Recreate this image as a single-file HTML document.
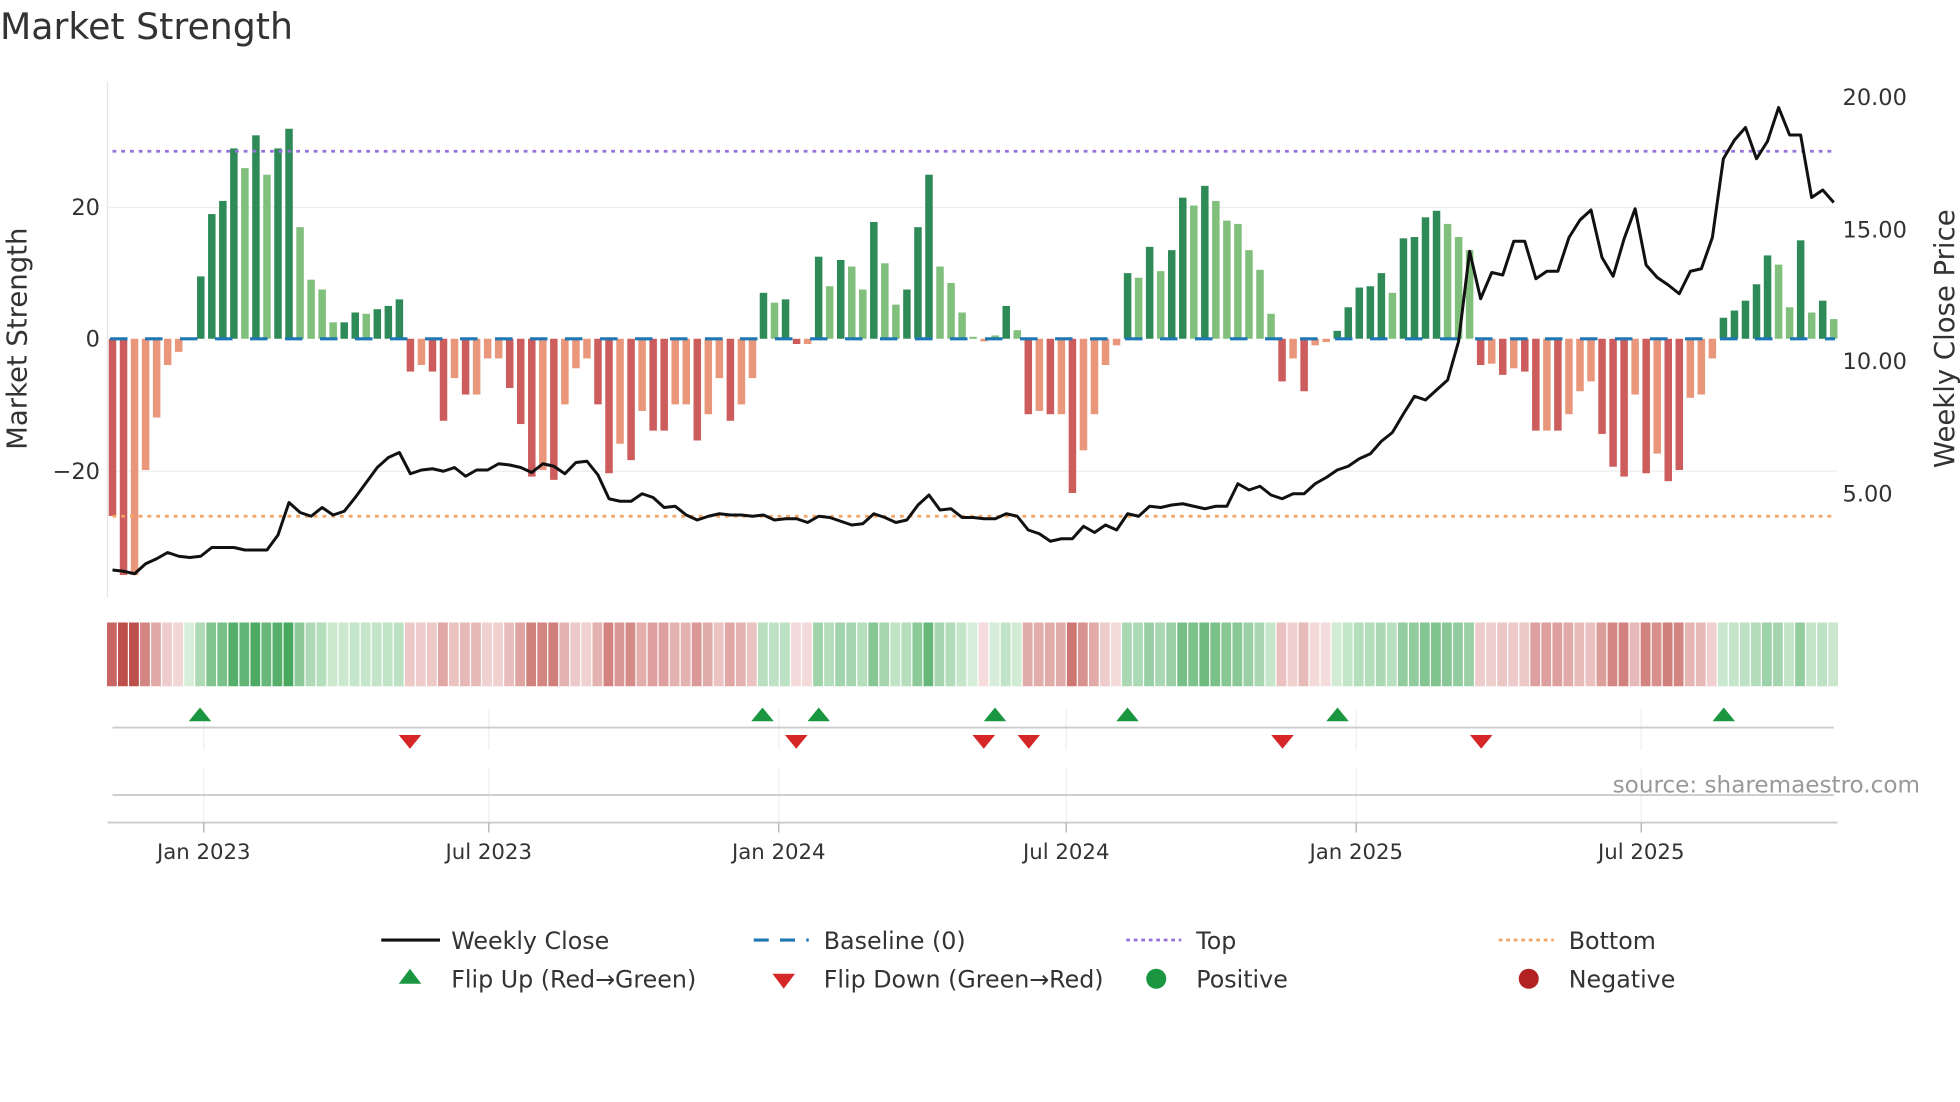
<!DOCTYPE html>
<html><head><meta charset="utf-8"><style>
html,body{margin:0;padding:0;background:#fff;width:1960px;height:1102px;overflow:hidden}
svg{display:block;font-family:"DejaVu Sans","Liberation Sans",sans-serif}
</style></head><body>
<svg id="s" width="1960" height="1102" viewBox="0 0 1568 881.6" xmlns="http://www.w3.org/2000/svg">
<text x="0" y="31" font-size="29" fill="#333">Market Strength</text>
<line x1="86" y1="65" x2="86" y2="478" stroke="#e6e6e6" stroke-width="1"/>
<line x1="86" y1="166" x2="1470" y2="166" stroke="#eeeeee"/>
<line x1="86" y1="377" x2="1470" y2="377" stroke="#eeeeee"/>
<g id="bars"></g>
<line x1="88" y1="271" x2="1468" y2="271" stroke="#1f77b4" stroke-width="2.5" stroke-dasharray="14 14"/>
<line x1="90" y1="121" x2="1468" y2="121" stroke="#9370db" stroke-width="2.2" stroke-dasharray="3 4"/>
<line x1="90" y1="413" x2="1468" y2="413" stroke="#f4a460" stroke-width="2.2" stroke-dasharray="3 4"/>
<polyline id="price" fill="none" stroke="#111" stroke-width="2.4" stroke-linejoin="round"/>
<g font-size="18" fill="#333">
<text x="80" y="172" text-anchor="end">20</text>
<text x="80" y="277" text-anchor="end">0</text>
<text x="80" y="383" text-anchor="end">−20</text>
<text x="1474" y="84">20.00</text>
<text x="1474" y="190">15.00</text>
<text x="1474" y="295">10.00</text>
<text x="1474" y="401">5.00</text>
</g>
<text transform="translate(21,271) rotate(-90)" text-anchor="middle" font-size="22" fill="#333">Market Strength</text>
<text transform="translate(1563,271) rotate(-90)" text-anchor="middle" font-size="22" fill="#333">Weekly Close Price</text>
<g id="strip"></g>
<g stroke="#eceff3" stroke-width="1">
<line x1="163" y1="567" x2="163" y2="600"/><line x1="163" y1="614" x2="163" y2="658"/>
<line x1="391" y1="567" x2="391" y2="600"/><line x1="391" y1="614" x2="391" y2="658"/>
<line x1="623" y1="567" x2="623" y2="600"/><line x1="623" y1="614" x2="623" y2="658"/>
<line x1="853" y1="567" x2="853" y2="600"/><line x1="853" y1="614" x2="853" y2="658"/>
<line x1="1085" y1="567" x2="1085" y2="600"/><line x1="1085" y1="614" x2="1085" y2="658"/>
<line x1="1313" y1="567" x2="1313" y2="600"/><line x1="1313" y1="614" x2="1313" y2="658"/>
</g>
<line x1="90" y1="582" x2="1467" y2="582" stroke="#ccc" stroke-width="1.5"/>
<line x1="90" y1="636" x2="1467" y2="636" stroke="#ccc" stroke-width="1.5"/>
<line x1="86" y1="658" x2="1470" y2="658" stroke="#ccc" stroke-width="1.5"/>
<g stroke="#bbb" stroke-width="1.2">
<line x1="163" y1="658" x2="163" y2="666"/><line x1="391" y1="658" x2="391" y2="666"/><line x1="623" y1="658" x2="623" y2="666"/><line x1="853" y1="658" x2="853" y2="666"/><line x1="1085" y1="658" x2="1085" y2="666"/><line x1="1313" y1="658" x2="1313" y2="666"/>
</g>
<g id="marks"></g>
<g font-size="17" fill="#333" text-anchor="middle">
<text x="163" y="687">Jan 2023</text><text x="391" y="687">Jul 2023</text><text x="623" y="687">Jan 2024</text><text x="853" y="687">Jul 2024</text><text x="1085" y="687">Jan 2025</text><text x="1313" y="687">Jul 2025</text>
</g>
<text x="1536" y="634" text-anchor="end" font-size="18.5" fill="#999">source: sharemaestro.com</text>
<g font-size="19" fill="#333">
<line x1="305" y1="752" x2="352" y2="752" stroke="#111" stroke-width="2.5"/>
<text x="361" y="759">Weekly Close</text>
<line x1="603" y1="752" x2="647" y2="752" stroke="#1f77b4" stroke-width="2.5" stroke-dasharray="12 9"/>
<text x="659" y="759">Baseline (0)</text>
<line x1="901" y1="752" x2="945" y2="752" stroke="#9370db" stroke-width="2.2" stroke-dasharray="3 3"/>
<text x="957" y="759">Top</text>
<line x1="1199" y1="752" x2="1243" y2="752" stroke="#f4a460" stroke-width="2.2" stroke-dasharray="3 3"/>
<text x="1255" y="759">Bottom</text>
<polygon points="319,787 337,787 328,775" fill="#1a9641"/>
<text x="361" y="790">Flip Up (Red→Green)</text>
<polygon points="618,779 636,779 627,791" fill="#d62728"/>
<text x="659" y="790">Flip Down (Green→Red)</text>
<circle cx="925" cy="783" r="8" fill="#1a9641"/>
<text x="957" y="790">Positive</text>
<circle cx="1223" cy="783" r="8" fill="#b22222"/>
<text x="1255" y="790">Negative</text>
</g>
</svg>
<script>
var V=[[-27,1],[-36,1],[-36,0],[-20,0],[-12,0],[-4,0],[-2,0],[0,0],[9.5,1],[19,1],[21,1],[29,1],[26,0],[31,1],[25,0],[29,1],[32,1],[17,0],[9,0],[7.5,0],[2.5,0],[2.5,1],[4,1],[3.8,0],[4.5,1],[5,1],[6,1],
[-5,1],[-4,0],[-5,1],[-12.5,1],[-6,0],[-8.5,1],[-8.5,0],[-3,0],[-3,0],[-7.5,1],[-13,1],[-21,1],[-20,0],[-21.5,1],[-10,0],[-4.5,0],[-3,0],[-10,1],[-20.5,1],[-16,0],[-18.5,1],[-11,0],[-14,1],[-14,1],[-10,0],[-10,0],[-15.5,1],[-11.5,0],[-6,0],[-12.5,1],[-10,0],[-6,0],
[7,1],[5.5,0],[6,1],[-0.8,1],[-0.8,0],[12.5,1],[8,0],[12,1],[11,0],[7.5,0],[17.8,1],[11.5,0],[5.2,0],[7.5,1],[17,1],[25,1],[11,0],[8.5,0],[4,0],[0.3,0],[-0.4,0],[0.5,0],[5,1],[1.3,0],
[-11.5,1],[-11,0],[-11.5,1],[-11.5,0],[-23.5,1],[-17,0],[-11.5,0],[-4,0],[-1,0],
[10,1],[9.3,0],[14,1],[10.3,0],[13.5,1],[21.5,1],[20.3,0],[23.3,1],[21,0],[18,0],[17.5,0],[13.5,0],[10.5,0],[3.8,0],
[-6.5,1],[-3,0],[-8,1],[-1,0],[-0.5,0],
[1.2,1],[4.8,1],[7.8,1],[8,1],[10,1],[7,0],[15.3,1],[15.5,1],[18.5,1],[19.5,1],[17.5,0],[15.5,0],[13.5,0],
[-4,1],[-3.8,0],[-5.5,1],[-4.5,0],[-5,1],[-14,1],[-14,0],[-14,1],[-11.5,0],[-8,0],[-6.5,0],[-14.5,1],[-19.5,1],[-21,1],[-8.5,0],[-20.5,1],[-17.5,0],[-21.7,1],[-20,1],[-9,0],[-8.5,0],[-3,0],
[3.2,1],[4.3,1],[5.8,1],[8.3,1],[12.7,1],[11.3,0],[4.8,0],[15,1],[4,0],[5.8,1],[3,0]];
var n=V.length,x0=90,x1=1467,sp=(x1-x0)/(n-1),NS="http://www.w3.org/2000/svg";
function el(t,a,p){var e=document.createElementNS(NS,t);for(var k in a)e.setAttribute(k,a[k]);p.appendChild(e);return e;}
var B=document.getElementById('bars'),S=document.getElementById('strip');
function mix(a,b,t){return 'rgb('+[0,1,2].map(function(i){return Math.round(a[i]+(b[i]-a[i])*t)}).join(',')+')';}
for(var i=0;i<n;i++){var v=V[i][0],d=V[i][1],cx=x0+i*sp,h=Math.abs(v)*5.25;
 var c=v>=0?(d?'#2e8b57':'#80bf7c'):(d?'#cd5c5c':'#e9967a');
 if(h>0.3)el('rect',{x:cx-3,y:v>=0?271-h:271,width:6,height:h,fill:c},B);
 var t=Math.min(Math.abs(v)/32,1);
 var sc=v>=0?mix([215,238,218],[72,168,94],t):mix([245,222,222],[190,80,75],t);
 el('rect',{x:cx-sp/2,y:498,width:sp-1,height:51,fill:sc},S);}
var P=[456,457,459,451,447,442,445,446,445,438,438,438,440,440,440,428,402,410,413,406,412,409,398,386,374,366,362,379,376,375,377,374,381,376,376,371,372,374,378,371,373,379,370,369,380,399,401,401,395,398,406,405,412,416,413,411,412,412,413,412,416,415,415,418,413,414,417,420,419,411,414,418,416,404,396,408,407,414,414,415,415,411,413,424,427,433,431,431,421,426,420,424,411,413,405,406,404,403,405,407,405,405,387,392,389,396,399,395,395,387,382,376,373,367,363,353,346,331,317,320,312,304,273,201,239,218,220,193,193,223,217,217,190,176,168,206,221,191,167,212,222,228,235,217,215,190,127,112,102,127,113,86,108,108,158,152,162];
var ps=(x1-x0)/(P.length-1);
document.getElementById('price').setAttribute('points',P.map(function(y,i){return (x0+i*ps).toFixed(1)+','+y}).join(' '));
var M=document.getElementById('marks');
[160,610,655,796,902,1070,1379].forEach(function(x){el('polygon',{points:(x-9)+',577 '+(x+9)+',577 '+x+',566',fill:'#1a9641'},M);});
[328,637,787,823,1026,1185].forEach(function(x){el('polygon',{points:(x-9)+',588 '+(x+9)+',588 '+x+',599',fill:'#d62728'},M);});
</script>
</body></html>
